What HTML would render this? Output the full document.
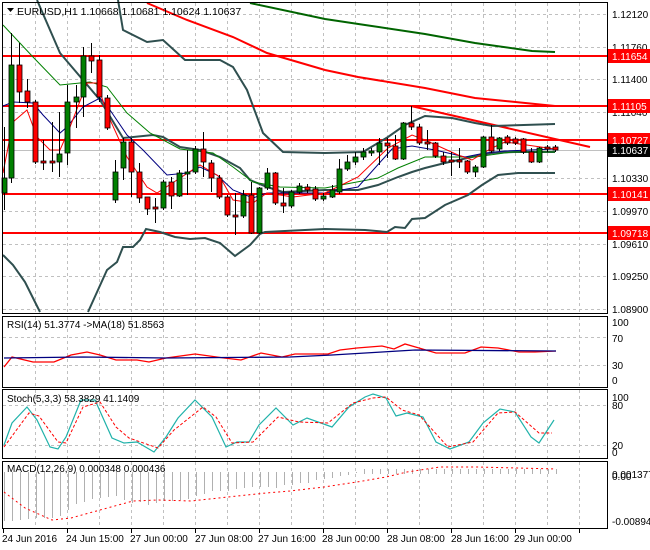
<!DOCTYPE html>
<html><head><meta charset="utf-8"><style>
html,body{margin:0;padding:0;background:#fff;}
svg{display:block;font-family:"Liberation Sans",sans-serif;}
</style></head><body>
<svg id="s" width="650" height="550" viewBox="0 0 650 550" xmlns="http://www.w3.org/2000/svg">
<rect width="650" height="550" fill="#fff"/>
<g id="grid" stroke="#c0c0c0" stroke-dasharray="3,3" stroke-width="1" fill="none">
<path d="M3 14.5H607M3 47.5H607M3 79.5H607M3 112.5H607M3 178.5H607M3 211.5H607M3 244.5H607M3 276.5H607M3 309.5H607"/>
<path d="M3 337.5H607M3 365.5H607M3 405.5H607M3 445.5H607"/>
</g>
<g id="vg"></g>
<line x1="3" y1="150.5" x2="607" y2="150.5" stroke="#c0c0c0"/>
<!-- long MAs -->
<polyline fill="none" stroke="#006400" stroke-width="2" points="250,3 325,19 365,25 425,34 475,43 532,51 555,52"/>
<polyline fill="none" stroke="#ff0000" stroke-width="2" points="147,3 187,20 233,37 267,53 325,70 358,77 425,88 475,98 555,106"/>
<!-- red levels -->
<g stroke="#ff0000" stroke-width="2">
<line x1="3" y1="56" x2="607" y2="56"/><line x1="3" y1="106" x2="607" y2="106"/><line x1="3" y1="140" x2="607" y2="140"/><line x1="3" y1="194" x2="607" y2="194"/><line x1="3" y1="233" x2="607" y2="233"/>
</g>
<polyline fill="none" stroke="#ff0000" stroke-width="2" points="411,106 590,147"/>
<!-- bollinger -->
<g fill="none" stroke="#2f4f4f" stroke-width="2">
<polyline points="118,0 123,30 147,42 163,40 185,60 220,60 233,67 247,90 263,133 283,152 325,153 363,152 388,137 405,125 425,116 452,118 475,123 492,126 555,124"/>
<polyline points="37,0 60,53 100,100 123,138 153,135 163,137 180,147 200,150 220,157 240,168 250,180 267,187 283,192 325,190 358,190 378,185 398,177 412,172 425,168 445,163 472,157 492,153 515,152 555,152"/>
<polyline points="3,255 13,265 25,282 40,312"/>
<polyline points="88,312 107,270 117,262 123,247 133,247 140,240 146,229 160,232 175,237 190,239 205,238 220,243 235,256 250,245 260,234 265,232 325,229 365,230 387,232 395,227 405,228 412,219 425,218 445,205 468,195 482,185 498,175 518,173 555,173"/>
</g>
<polyline fill="none" stroke="#008000" stroke-width="1" points="3,25 33,57 60,85 90,82 107,87 127,113 150,133 180,149 213,153 233,167 253,182 280,187 325,188 378,178 398,168 425,157 475,157 512,152 555,152"/>
<polyline fill="none" stroke="#000080" stroke-width="1" points="3,106 13,102 33,103 43,115 60,133 67,127 83,107 100,98 110,110 127,135 143,150 167,175 187,173 200,167 217,175 233,190 253,198 267,193 300,193 325,193 358,187 392,149 412,146 435,150 465,157 485,153 505,151 555,149"/>
<polyline fill="none" stroke="#ff0000" stroke-width="1" points="3,173 13,122 27,110 37,137 50,150 60,150 70,127 87,83 97,83 107,113 127,157 147,187 157,193 177,180 200,165 220,177 233,200 253,203 267,193 293,197 325,193 358,177 388,148 412,135 425,140 458,155 472,160 492,148 505,142 555,149"/>
<g id="candles"></g>
<!-- panels frames -->
<g fill="none" stroke="#000" stroke-width="1">
<rect x="2.5" y="2.5" width="605" height="311"/>
<rect x="2.5" y="316.5" width="605" height="71"/>
<rect x="2.5" y="389.5" width="605" height="69"/>
<rect x="2.5" y="461.5" width="605" height="67"/>
</g>
<!-- RSI -->
<polyline fill="none" stroke="#ff0000" stroke-width="1.3" points="4,367 12,357 33,362 54,362 71,355 87,352 100,355 116,360 137,360 149,362 166,358 195,354 224,358 241,360 261,353 282,357 295,354 328,354 340,350 357,348 382,346 394,349 405,344 419,348 436,353 465,353 481,347 498,348 519,352 535,352 556,351"/>
<polyline fill="none" stroke="#000080" stroke-width="1.3" points="4,358 83,357 166,358 290,357 332,355 382,352 415,350 556,351"/>
<!-- Stoch -->
<polyline fill="none" stroke="#20b2aa" stroke-width="1.2" points="4,445 12,423 27,407 37,420 50,447 58,449 66,437 81,400 95,400 112,438 124,443 137,442 154,452 166,437 178,418 195,400 212,417 226,447 237,442 249,442 259,425 276,408 293,425 307,418 332,427 349,407 365,397 373,394 386,398 396,416 407,413 423,417 436,442 450,449 469,442 483,423 500,409 515,412 531,437 539,443 554,420"/>
<polyline fill="none" stroke="#ff0000" stroke-width="1" stroke-dasharray="3,2" points="4,447 29,413 39,416 58,442 66,443 83,407 100,402 116,427 129,438 158,448 174,430 203,407 216,417 232,443 253,442 278,417 299,422 328,423 353,403 373,398 386,397 402,410 419,415 448,447 473,442 498,413 515,412 539,433 552,433"/>
<!-- MACD -->
<g id="macd" stroke="#b0b0b0" stroke-width="1"></g>
<polyline fill="none" stroke="#ff0000" stroke-width="1" stroke-dasharray="2,3" points="4,492 25,508 52,520 71,518 100,510 133,501 158,500 191,501 228,497 266,493 290,491 324,487 357,482 386,477 407,472 440,467 477,467 556,469"/>
<!-- labels -->
<g font-size="10.5" fill="#000">
<text x="17" y="15">EURUSD,H1  1.10668 1.10681 1.10624 1.10637</text>
<text x="7" y="328" font-size="10">RSI(14) 51.3774  -&gt;MA(18) 51.8563</text>
<text x="7" y="402" font-size="10">Stoch(5,3,3) 58.3829 41.1409</text>
<text x="7" y="472" font-size="10">MACD(12,26,9) 0.000348 0.000436</text>
</g>
<path d="M7 8h7l-3.5 4z" fill="#000"/>
<g font-size="10" fill="#000">
<text x="612" y="18">1.12120</text>
<text x="612" y="51">1.11760</text>
<text x="612" y="83">1.11400</text>
<text x="612" y="116">1.11040</text>
<text x="612" y="182">1.10330</text>
<text x="612" y="215">1.09970</text>
<text x="612" y="248">1.09610</text>
<text x="612" y="280">1.09250</text>
<text x="612" y="313">1.08900</text>
<text x="612" y="326">100</text>
<text x="612" y="342">70</text>
<text x="612" y="369">30</text>
<text x="612" y="384">0</text>
<text x="612" y="401">100</text>
<text x="612" y="409">80</text>
<text x="612" y="449">20</text>
<text x="612" y="456">0</text>
<text x="612" y="478">0.001377</text>
<text x="612" y="480">0.00</text>
<text x="612" y="525">-0.008948</text>
</g>
<g font-size="10">
<rect x="608" y="49" width="42" height="14" fill="#ff0000"/><text x="612" y="60" fill="#fff">1.11654</text>
<rect x="608" y="99" width="42" height="14" fill="#ff0000"/><text x="612" y="110" fill="#fff">1.11105</text>
<rect x="608" y="133" width="42" height="14" fill="#ff0000"/><text x="612" y="144" fill="#fff">1.10727</text>
<rect x="608" y="144" width="42" height="13" fill="#000"/><text x="612" y="154" fill="#fff">1.10637</text>
<rect x="608" y="187" width="42" height="14" fill="#ff0000"/><text x="612" y="198" fill="#fff">1.10141</text>
<rect x="608" y="226" width="42" height="14" fill="#ff0000"/><text x="612" y="237" fill="#fff">1.09718</text>
</g>
<g font-size="10" fill="#000">
<text x="2" y="542">24 Jun 2016</text>
<text x="66" y="542">24 Jun 15:00</text>
<text x="130" y="542">27 Jun 00:00</text>
<text x="195" y="542">27 Jun 08:00</text>
<text x="258" y="542">27 Jun 16:00</text>
<text x="322" y="542">28 Jun 00:00</text>
<text x="387" y="542">28 Jun 08:00</text>
<text x="451" y="542">28 Jun 16:00</text>
<text x="514" y="542">29 Jun 00:00</text>
</g>
</svg>
<script>
var NS="http://www.w3.org/2000/svg";
function el(p,t,a){var e=document.createElementNS(NS,t);for(var k in a)e.setAttribute(k,a[k]);p.appendChild(e);return e;}
var vg=document.getElementById("vg");
var d="";
for(var x=35;x<607;x+=32){var xx=x+0.5;d+="M"+xx+" 3V313M"+xx+" 317V387M"+xx+" 390V458M"+xx+" 462V528";}
el(vg,"path",{d:d,stroke:"#c0c0c0","stroke-dasharray":"3,3",fill:"none"});
var td="";for(var x=3;x<607;x+=64){td+="M"+(x+0.5)+" 529V533";}
el(vg,"path",{d:td,stroke:"#000",fill:"none"});
// x, top, bottom, hi, lo, g/r
var C=[[4,178,193,127,210,"g"],[11,65,178,33,183,"g"],[19,65,92,43,103,"r"],[27,91,102,79,108,"r"],[35,102,162,100,164,"r"],[43,161,163,140,170,"r"],[52,161,163,122,172,"r"],[59,154,162,112,177,"g"],[67,102,153,85,165,"g"],[76,97,102,85,128,"g"],[83,56,97,47,117,"g"],[91,56,61,43,73,"r"],[99,60,97,55,102,"r"],[107,98,128,95,130,"r"],[115,172,200,160,203,"g"],[123,142,168,138,180,"g"],[131,142,172,138,197,"r"],[139,172,198,163,203,"r"],[147,197,209,197,215,"r"],[155,207,209,198,223,"r"],[163,182,208,180,210,"g"],[171,182,196,177,209,"r"],[179,173,196,170,197,"g"],[187,172,174,150,195,"g"],[195,149,172,146,174,"g"],[203,149,162,132,177,"r"],[211,163,178,160,192,"r"],[219,178,197,175,199,"r"],[227,197,215,195,217,"r"],[235,215,217,193,235,"r"],[243,195,216,190,218,"g"],[251,195,233,182,234,"r"],[259,188,233,187,234,"g"],[267,173,188,168,190,"g"],[275,173,203,172,205,"r"],[283,203,206,188,213,"r"],[291,192,206,190,208,"g"],[299,186,192,183,194,"g"],[307,187,190,184,193,"r"],[315,189,199,186,201,"r"],[323,196,199,193,201,"g"],[332,190,197,185,198,"g"],[339,169,192,159,194,"g"],[347,162,169,155,171,"g"],[355,157,162,152,165,"g"],[363,152,157,148,160,"g"],[371,151,153,148,156,"g"],[379,143,152,138,165,"g"],[387,143,146,138,158,"r"],[395,146,159,135,160,"r"],[403,123,159,122,160,"g"],[411,123,127,106,130,"r"],[419,127,143,124,145,"r"],[427,142,144,130,150,"r"],[435,143,156,142,158,"r"],[443,156,162,152,165,"r"],[451,160,162,152,176,"r"],[459,160,162,148,168,"r"],[467,161,172,160,174,"r"],[475,167,172,165,177,"g"],[483,137,167,136,168,"g"],[491,137,151,125,153,"r"],[499,138,149,137,151,"g"],[507,137,143,135,145,"r"],[515,139,143,137,145,"r"],[523,139,152,138,154,"r"],[531,152,162,148,163,"r"],[539,148,162,147,163,"g"],[547,147,149,145,152,"r"],[555,147,150,145,152,"r"]];
var cg=document.getElementById("candles");
C.forEach(function(c){
 el(cg,"line",{x1:c[0]+0.5,x2:c[0]+0.5,y1:c[3],y2:c[4],stroke:"#000"});
 var h=Math.max(c[2]-c[1],1);
 el(cg,"rect",{x:c[0]-2,y:c[1],width:5,height:h,fill:c[5]=="g"?"#008000":"#ff0000",stroke:"#000","stroke-width":"0.8"});
});
var mb=[521,521,520,519,518,518,518,516,510,504,502,499,498,497,496,500,503,502,505,503,501,501,500,499,496,494,491,491,491,489,488,487,487,487,488,485,485,483,483,480,479,478,476,475,473];
var mg=document.getElementById("macd");var md="";
for(var i=0;i<mb.length;i++){var x=4+i*8+0.5;md+="M"+x+" 472V"+mb[i];}
for(var x=4+mb.length*8;x<560;x+=8){md+="M"+(x+0.5)+" 469V474";}
el(mg,"path",{d:md,fill:"none"});
</script>
</body></html>
